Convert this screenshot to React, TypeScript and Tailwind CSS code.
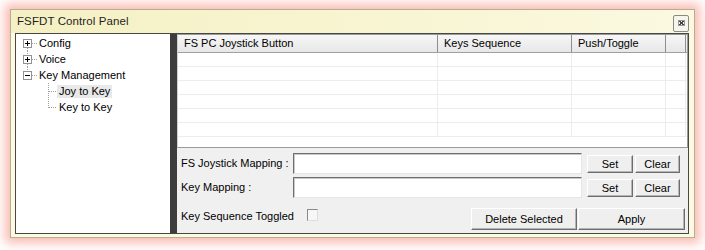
import React from 'react'

const font = { fontFamily: '"Liberation Sans", Arial, sans-serif' }

function TopRow({ label, open, first, last }: { label: string; open?: boolean; first?: boolean; last?: boolean }) {
  return (
    <div className="flex items-center h-[16px]">
      <svg width="22" height="16" className="shrink-0" shapeRendering="crispEdges">
        {!first && <line x1="11.5" y1="0" x2="11.5" y2="4" stroke="#a0a0a0" strokeDasharray="1 1" />}
        {!last && <line x1="11.5" y1="13" x2="11.5" y2="16" stroke="#a0a0a0" strokeDasharray="1 1" />}
        <line x1="16" y1="8.5" x2="22" y2="8.5" stroke="#a0a0a0" strokeDasharray="1 1" />
        <rect x="7.5" y="4.5" width="8" height="8" fill="#fff" stroke="#919191" />
        <line x1="9" y1="8.5" x2="14" y2="8.5" stroke="#000" />
        {!open && <line x1="11.5" y1="6" x2="11.5" y2="11" stroke="#000" />}
      </svg>
      <span className="pl-[1px]">{label}</span>
    </div>
  )
}

function ChildRow({ label, last, selected }: { label: string; last?: boolean; selected?: boolean }) {
  return (
    <div className="flex items-center h-[16px]">
      <svg width="41" height="16" className="shrink-0" shapeRendering="crispEdges">
        <line x1="32.5" y1="0" x2="32.5" y2={last ? 9 : 16} stroke="#a0a0a0" strokeDasharray="1 1" />
        <line x1="33" y1="8.5" x2="41" y2="8.5" stroke="#a0a0a0" strokeDasharray="1 1" />
      </svg>
      <span className={`px-[2px] leading-[13px] ${selected ? 'bg-[#e9e9e9]' : ''}`}>{label}</span>
    </div>
  )
}

function Btn({ children, w }: { children: React.ReactNode; w: string }) {
  return (
    <button
      className={`${w} h-full bg-[#efefef] border border-t-white border-l-white border-r-[#6d6d6d] border-b-[#6d6d6d] shadow-[inset_-1px_-1px_0_#b5b5b5] text-[11px] text-black flex items-center justify-center`}
    >
      {children}
    </button>
  )
}

function Field() {
  return <div className="w-[289px] h-[21px] bg-white border border-t-[#6f6f6f] border-l-[#6f6f6f] border-r-[#e6e6e6] border-b-[#e6e6e6] shadow-[inset_1px_1px_0_#c9c9c9]" />
}

const cols = [
  { t: 'FS PC Joystick Button', w: 'w-[260px]' },
  { t: 'Keys Sequence', w: 'w-[134px]' },
  { t: 'Push/Toggle', w: 'w-[94px]' },
  { t: '', w: 'w-[20px]' },
]

export default function App() {
  return (
    <div className="w-[705px] h-[250px] bg-white pt-[9px] pl-[10px] text-[11px] text-black" style={font}>
      <div className="w-[685px] h-[229px] border border-[#b3ae95] bg-[#fcfadf] shadow-[0_0_10px_5px_rgba(246,120,100,0.5)] flex flex-col">
        {/* title bar */}
        <div className="h-[23px] flex items-center pl-[6px] pr-[5px] bg-gradient-to-r from-[#f5f0c3] to-[#fbf9e0]">
          <span className="text-[11.5px] text-[#1e1e1e] tracking-[0.1px]">FSFDT Control Panel</span>
          <div className="ml-auto mt-[3px] w-[16px] h-[17px] rounded-[2px] border border-[#8b8b80] bg-[#f6f5ee] flex items-center justify-center">
            <svg width="7" height="6" viewBox="0 0 7 6" shapeRendering="crispEdges">
              <rect x="0.5" y="0.5" width="6" height="5" fill="none" stroke="#9a9a9a" />
              <path d="M1.5 1 L5.5 5 M5.5 1 L1.5 5" stroke="#444" strokeWidth="1" fill="none" />
            </svg>
          </div>
        </div>

        {/* content */}
        <div className="ml-[4px] mr-[5px] h-[201px] border border-[#474747] flex">
          {/* tree */}
          <div className="w-[154px] bg-white pt-[1px]">
            <TopRow label="Config" first />
            <TopRow label="Voice" />
            <TopRow label="Key Management" open last />
            <ChildRow label="Joy to Key" selected />
            <ChildRow label="Key to Key" last />
          </div>

          {/* splitter */}
          <div className="w-[7px] bg-[#3d3d3d]" />

          {/* right pane */}
          <div className="flex-1 flex flex-col">
            <div className="h-[114px] bg-white border border-[#9a9a9a] border-l-[#d0d0d0] flex flex-col">
              <div className="h-[18px] flex border-b border-[#a0a0a0] bg-gradient-to-b from-[#f7f7f7] to-[#e7e7e7]">
                {cols.map((c, i) => (
                  <div key={i} className={`${c.w} h-full border-r border-[#8e8e8e] pl-[6px] flex items-center`}>
                    {c.t}
                  </div>
                ))}
              </div>
              {[0, 1, 2, 3, 4, 5].map(r => (
                <div key={r} className="h-[14px] flex border-b border-[#ececec]">
                  {cols.map((c, i) => (
                    <div key={i} className={`${c.w} h-full border-r border-[#ececec]`} />
                  ))}
                </div>
              ))}
            </div>

            <div className="flex-1 bg-[#f0f0f0] pl-[4px] pt-[5px] flex flex-col">
              <div className="flex h-[21px] items-center">
                <div className="w-[112px]">FS Joystick Mapping :</div>
                <Field />
                <div className="flex gap-[2px] ml-[5px] h-[18px] mt-[1px]">
                  <Btn w="w-[46px]">Set</Btn>
                  <Btn w="w-[45px]">Clear</Btn>
                </div>
              </div>
              <div className="flex h-[21px] items-center mt-[3px]">
                <div className="w-[112px]">Key Mapping :</div>
                <Field />
                <div className="flex gap-[2px] ml-[5px] h-[18px] mt-[1px]">
                  <Btn w="w-[46px]">Set</Btn>
                  <Btn w="w-[45px]">Clear</Btn>
                </div>
              </div>
              <div className="flex h-[22px] items-center mt-[10px]">
                <div className="w-[126px] mt-[-6px]">Key Sequence Toggled</div>
                <div className="w-[11px] h-[12px] bg-[#f7f7f7] border border-t-[#8a8a8a] border-l-[#8a8a8a] border-r-[#dedede] border-b-[#dedede] mt-[-9px]" />
                <div className="ml-auto mr-[3px] flex gap-[1px] h-full">
                  <Btn w="w-[106px]">Delete Selected</Btn>
                  <Btn w="w-[107px]">Apply</Btn>
                </div>
              </div>
            </div>
          </div>
        </div>
      </div>
    </div>
  )
}
